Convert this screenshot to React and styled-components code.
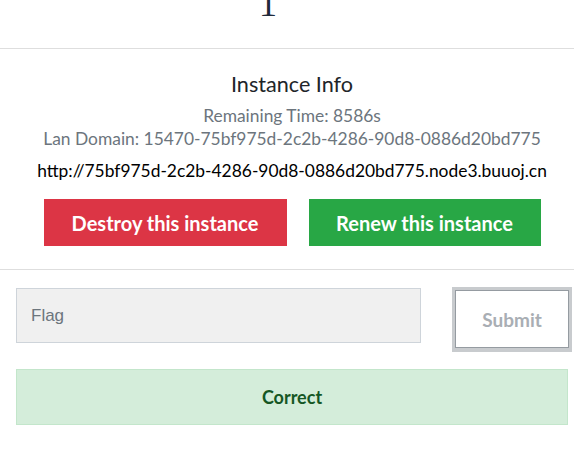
import React from "react";
import styled, { createGlobalStyle } from "styled-components";

const GlobalStyle = createGlobalStyle`
  html, body {
    margin: 0;
    padding: 0;
    background: #ffffff;
    font-family: "Lato", "Liberation Sans", sans-serif;
  }
`;

const Page = styled.div`
  width: 574px;
  height: 451px;
  overflow: hidden;
  display: flex;
  flex-direction: column;
`;

const ValueBox = styled.div`
  height: 48px;
  display: flex;
  justify-content: center;
  overflow: hidden;
`;

const Value = styled.span`
  font-family: "Liberation Serif", serif;
  font-size: 36px;
  line-height: 36px;
  color: #1f2a3a;
  margin-top: -14px;
  margin-left: -38px;
`;

const Rule = styled.hr`
  margin: 0;
  border: 0;
  border-top: 1px solid #dedede;
  width: 100%;
`;

const Info = styled.section`
  display: flex;
  flex-direction: column;
  align-items: center;
  padding: 22px 6px 0 16px;
  height: 220px;
  box-sizing: border-box;
`;

const Title = styled.h4`
  margin: 0 0 7px;
  font-size: 21.6px;
  font-weight: 400;
  line-height: 26px;
  color: #212529;
`;

const Muted = styled.div`
  font-size: 17.4px;
  line-height: 23px;
  color: #6c757d;
  white-space: nowrap;
`;

const Link = styled.div`
  margin-top: 10px;
  font-size: 17.4px;
  line-height: 22px;
  color: #000000;
  white-space: nowrap;
`;

const Actions = styled.div`
  display: flex;
  gap: 22px;
  margin-top: 17px;
`;

const ActionButton = styled.button`
  width: ${(p) => p.$w}px;
  height: 47px;
  border: 0;
  background: ${(p) => p.$bg};
  color: #ffffff;
  font-family: "Lato", sans-serif;
  font-weight: 700;
  font-size: 20px;
  padding: 0;
`;

const FlagRow = styled.form`
  display: flex;
  align-items: flex-start;
  padding: 18px 2px 0 16px;
  gap: 31px;
`;

const FlagInput = styled.input`
  width: 405px;
  height: 55px;
  box-sizing: border-box;
  border: 1px solid #ced4da;
  background: #f0f0f0;
  padding: 0 14px;
  font-family: "Liberation Sans", Arial, sans-serif;
  font-size: 17px;
  outline: none;
  &::placeholder {
    color: #6c757d;
  }
`;

const SubmitButton = styled.button`
  width: 120px;
  height: 65px;
  box-sizing: border-box;
  background: #ffffff;
  border: 3px solid #c8cbce;
  border-bottom-width: 4px;
  box-shadow: inset 0 0 0 1px #959ba1;
  font-family: "Lato", sans-serif;
  font-weight: 700;
  font-size: 19px;
  color: #a9aeb4;
  padding: 0;
  margin-top: -1px;
`;

const Alert = styled.div`
  margin: 17px 6px 0 16px;
  height: 56px;
  box-sizing: border-box;
  background: #d4edda;
  border: 1px solid #c3e6cb;
  color: #155724;
  font-size: 18px;
  font-weight: 700;
  display: flex;
  align-items: center;
  justify-content: center;
`;

export default function App() {
  return (
    <>
      <GlobalStyle />
      <Page>
        <ValueBox>
          <Value>1</Value>
        </ValueBox>
        <Rule />
        <Info>
          <Title>Instance Info</Title>
          <Muted>Remaining Time: 8586s</Muted>
          <Muted>Lan Domain: 15470-75bf975d-2c2b-4286-90d8-0886d20bd775</Muted>
          <Link>http://75bf975d-2c2b-4286-90d8-0886d20bd775.node3.buuoj.cn</Link>
          <Actions>
            <ActionButton $w={243} $bg="#dc3545">Destroy this instance</ActionButton>
            <ActionButton $w={232} $bg="#28a745">Renew this instance</ActionButton>
          </Actions>
        </Info>
        <Rule />
        <FlagRow onSubmit={(e) => e.preventDefault()}>
          <FlagInput placeholder="Flag" />
          <SubmitButton type="submit">Submit</SubmitButton>
        </FlagRow>
        <Alert>Correct</Alert>
      </Page>
    </>
  );
}
